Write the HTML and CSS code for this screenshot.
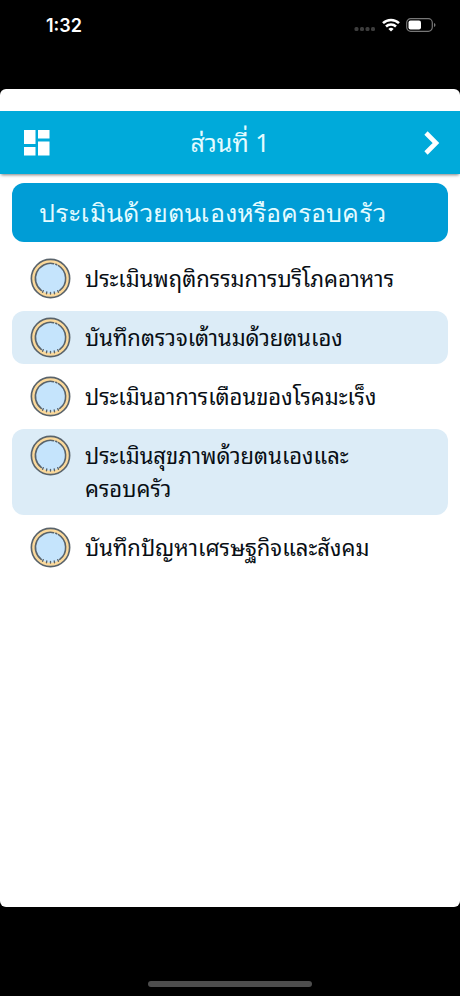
FILE: index.html
```html
<!DOCTYPE html>
<html lang="th">
<head>
<meta charset="utf-8">
<meta name="viewport" content="width=device-width, initial-scale=1">
<title>ส่วนที่ 1</title>
<link rel="stylesheet" href="styles.css">
</head>
<body>
<svg class="defs" aria-hidden="true">
  <symbol id="plate" viewBox="0 0 42 42">
    <circle cx="21" cy="21" r="19.6" fill="#fbd99b" stroke="#59636b" stroke-width="1.7"/>
    <circle cx="21" cy="21" r="15.5" fill="#c5e4fc"/>
    <path d="M11.5 33.2A15.5 15.5 0 0 1 24.2 5.8M26.4 6.5l1 .4M29.2 7.8A15.5 15.5 0 0 1 30.5 33.2" fill="none" stroke="#59636b" stroke-width="1.6" stroke-linecap="round"/>
    <path d="M13.6 33.4l-.7 1.8M17.2 34.8l-.3 1.8M21 35.2v1.8M24.8 34.8l.3 1.8M28.4 33.4l.7 1.8" fill="none" stroke="#59636b" stroke-width="1.4" stroke-linecap="round"/>
  </symbol>
</svg>
<div class="phone">
  <div class="status">
    <time class="clock">1:32</time>
    <div class="signals">
      <svg class="dots" width="22" height="6" viewBox="0 0 22 6" fill="#3d3d3d"><rect x="0.5" y="1" width="4" height="4" rx="1.5"/><rect x="6" y="1" width="4" height="4" rx="1.5"/><rect x="11.5" y="1" width="4" height="4" rx="1.5"/><rect x="17" y="1" width="4" height="4" rx="1.5"/></svg>
      <svg width="18" height="14" viewBox="0 0 18 14" fill="none" stroke="#fff" stroke-width="2.5"><path d="M1 5.2a11.4 11.4 0 0 1 16 0M4 8.5a7.1 7.1 0 0 1 10 0"/><path d="M9 13.5 6.4 10.9a3.8 3.8 0 0 1 5.2 0z" fill="#fff" stroke="none"/></svg>
      <svg width="30" height="14" viewBox="0 0 30 14"><rect x=".7" y=".7" width="25.6" height="12.6" rx="4" fill="none" stroke="#777" stroke-width="1.2"/><rect x="2.5" y="2.5" width="12.5" height="9" rx="2" fill="#fff"/><path d="M28 5v4q1.5-.7 1.5-2T28 5z" fill="#777"/></svg>
    </div>
  </div>
  <main class="screen">
    <header class="bar">
      <button class="icon-button" type="button" aria-label="เมนู"><svg width="26" height="26" viewBox="0 0 26 26" fill="#fff"><path d="M0 0h11.5v14H0zM14 0h11.5v8.5H14zM0 17h11.5v8.5H0zM14 11.5h11.5v14H14z"/></svg></button>
      <h1 class="bar-title">ส่วนที่ 1</h1>
      <button class="icon-button next" type="button" aria-label="ถัดไป"><svg width="16" height="24" viewBox="0 0 16 24" fill="none" stroke="#fff" stroke-width="4.6"><path d="M2 2l10 10L2 22"/></svg></button>
    </header>
    <section class="content">
      <h2 class="heading">ประเมินด้วยตนเองหรือครอบครัว</h2>
      <ul class="list">
        <li><a class="row" href="#food"><svg class="plate"><use href="#plate"/></svg><span class="label">ประเมินพฤติกรรมการบริโภคอาหาร</span></a></li>
        <li><a class="row tinted" href="#breast"><svg class="plate"><use href="#plate"/></svg><span class="label">บันทึกตรวจเต้านมด้วยตนเอง</span></a></li>
        <li><a class="row" href="#cancer"><svg class="plate"><use href="#plate"/></svg><span class="label">ประเมินอาการเตือนของโรคมะเร็ง</span></a></li>
        <li><a class="row tinted" href="#family"><svg class="plate"><use href="#plate"/></svg><span class="label">ประเมินสุขภาพด้วยตนเองและ<wbr>ครอบครัว</span></a></li>
        <li><a class="row" href="#social"><svg class="plate"><use href="#plate"/></svg><span class="label">บันทึกปัญหาเศรษฐกิจและสังคม</span></a></li>
      </ul>
    </section>
  </main>
  <footer class="home"><div class="home-line"></div></footer>
</div>
</body>
</html>
```
FILE: styles.css
```css
* { box-sizing: border-box; }
body {
  margin: 0;
  background: #000;
  color: #080e14;
  font-family: "Noto Sans Thai Looped", "DejaVu Sans", monospace;
}
h1, h2, ul { margin: 0; padding: 0; font-weight: 400; }
ul { list-style: none; }
.defs { position: absolute; width: 0; height: 0; }
.phone { display: flex; flex-direction: column; min-height: 100vh; }
.status {
  display: flex;
  justify-content: space-between;
  align-items: flex-start;
  height: 89px;
  padding: 16px 24px 0 46px;
}
.clock { color: #fff; font: 600 18px/20px Inter, sans-serif; }
.signals { display: flex; align-items: center; gap: 6px; padding-top: 2px; }
.dots { align-self: flex-end; }
.screen {
  flex: 1;
  padding-top: 22px;
  background: #fff;
  border-radius: 6px;
}
.bar {
  display: grid;
  grid-template-columns: 1fr auto 1fr;
  align-items: center;
  height: 63px;
  padding: 0 20px;
  background: #00aada;
  box-shadow: 0 2px 3px -1px rgba(0, 0, 0, 0.5);
}
.icon-button {
  display: flex;
  justify-self: start;
  padding: 0 4px;
  border: 0;
  background: none;
  cursor: pointer;
}
.next { justify-self: end; padding: 0; }
.bar-title { color: #e4fbff; font-size: 25px; line-height: 34px; padding-bottom: 4px; }
.content { padding: 9px 12px 0; }
.heading {
  padding: 12px 27px;
  border-radius: 12px;
  background: #009dd6;
  color: #e4fbff;
  font: 400 25px/35px "Noto Sans", sans-serif;
}
.list {
  display: flex;
  flex-direction: column;
  gap: 6px;
  padding-top: 10px;
}
.row {
  display: flex;
  align-items: flex-start;
  gap: 14px;
  padding: 6px 64px 6px 18px;
  border-radius: 12px;
  color: inherit;
  text-decoration: none;
}
.tinted { background: #dcecf7; }
.plate { flex: none; width: 41px; height: 41px; }
.label { padding: 3px 0 5px; font-size: 22px; line-height: 33px; white-space: nowrap; }
.tinted .label { white-space: normal; }
.home {
  display: flex;
  justify-content: center;
  align-items: flex-end;
  height: 89px;
  padding-bottom: 9px;
}
.home-line { width: 164px; height: 6px; border-radius: 3px; background: #4d4d4d; }
```
